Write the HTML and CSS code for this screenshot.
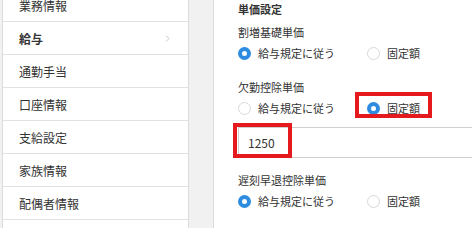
FILE: index.html
```html
<!DOCTYPE html>
<html lang="ja">
<head>
  <meta charset="UTF-8">
  <meta name="viewport" content="width=device-width, initial-scale=1.0">
  <title>単価設定</title>
  <link rel="stylesheet" href="styles.css">
</head>
<body>
  <div class="page">
    <ul class="side-menu">
      <li class="menu-item">業務情報</li>
      <li class="menu-item active">給与
        <svg class="chevron" width="5" height="7" viewBox="0 0 5 7"><polyline points="1,0.5 4,3.5 1,6.5" fill="none" stroke="#c4c4c4" stroke-width="1"/></svg>
      </li>
      <li class="menu-item">通勤手当</li>
      <li class="menu-item">口座情報</li>
      <li class="menu-item">支給設定</li>
      <li class="menu-item">家族情報</li>
      <li class="menu-item">配偶者情報</li>
      <li class="menu-item"></li>
    </ul>

    <div class="panel">
      <div class="section-title">単価設定</div>

      <div class="field first">
        <div class="field-label">割増基礎単価</div>
        <div class="radio-group">
          <label class="radio checked"><span class="radio-dot"></span>給与規定に従う</label>
          <label class="radio"><span class="radio-dot"></span>固定額</label>
        </div>
      </div>

      <div class="field">
        <div class="field-label">欠勤控除単価</div>
        <div class="radio-group">
          <label class="radio"><span class="radio-dot"></span>給与規定に従う</label>
          <label class="radio checked"><span class="radio-dot"></span>固定額<span class="mark mark-radio"></span></label>
        </div>
        <div class="input-wrap">
          <input class="text-input" type="text" value="1250">
          <span class="mark mark-input"></span>
        </div>
      </div>

      <div class="field">
        <div class="field-label">遅刻早退控除単価</div>
        <div class="radio-group">
          <label class="radio checked"><span class="radio-dot"></span>給与規定に従う</label>
          <label class="radio"><span class="radio-dot"></span>固定額</label>
        </div>
      </div>
    </div>
  </div>
</body>
</html>
```

FILE: styles.css
```css
body {
  margin: 0;
  background: #f1f1f1;
  color: #333;
  font-family: "Noto Sans CJK JP", "Noto Sans", sans-serif;
  overflow: hidden;
  height: 228px;
}

.page {
  display: flex;
  height: 228px;
  overflow: hidden;
}

.side-menu {
  list-style: none;
  margin: -11px 0 0 2px;
  padding: 0;
  width: 185px;
  background: #fff;
  border-left: 1px solid #dcdcdc;
  border-right: 1px solid #dcdcdc;
  flex-shrink: 0;
}

.menu-item {
  display: flex;
  align-items: center;
  justify-content: space-between;
  height: 32px;
  padding: 0 18px 0 16px;
  border-bottom: 1px solid #e2e2e2;
  font-size: 12px;
}

.menu-item.active {
  font-weight: bold;
}

.chevron {
  display: block;
}

.panel {
  flex: 1;
  min-width: 0;
  margin-left: 24px;
  background: #fff;
  border-left: 1px solid #dcdcdc;
  padding-left: 24px;
  font-size: 11px;
  overflow: hidden;
}

.section-title {
  line-height: 18px;
  font-weight: bold;
}

.field {
  margin-top: 13px;
}

.field.first {
  margin-top: 5px;
}

.field-label {
  line-height: 18px;
}

.radio-group {
  display: flex;
  height: 24px;
  align-items: center;
}

.radio {
  position: relative;
  display: flex;
  align-items: center;
  flex-shrink: 0;
  width: 129px;
  height: 24px;
}

.radio-dot {
  width: 13px;
  height: 13px;
  box-sizing: border-box;
  border: 1px solid #d6d8dc;
  border-radius: 50%;
  background: #fff;
  margin-right: 7px;
}

.radio.checked .radio-dot {
  border: 4px solid #2d8ce0;
}

.input-wrap {
  position: relative;
  margin-top: 7px;
}

.text-input {
  display: block;
  width: 320px;
  height: 31px;
  box-sizing: border-box;
  border: 1px solid #cfcfcf;
  padding: 0 9px;
  font-family: inherit;
  font-size: 12px;
  color: #333;
  outline: none;
}

.mark {
  position: absolute;
  box-sizing: border-box;
  border: 4px solid #e41a1f;
}

.mark-radio {
  left: -12px;
  top: -4px;
  width: 77px;
  height: 26px;
}

.mark-input {
  left: -5px;
  top: -4px;
  width: 59px;
  height: 35px;
}
```
